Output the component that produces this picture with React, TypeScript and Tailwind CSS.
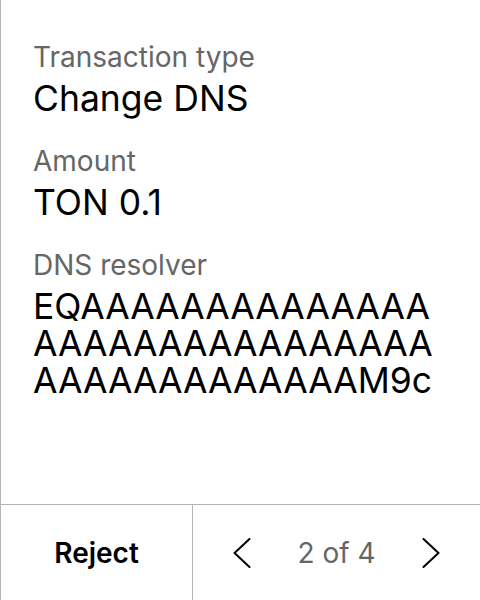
import React from 'react';

const rows = [
  { label: 'Transaction type', value: 'Change DNS' },
  { label: 'Amount', value: 'TON 0.1' },
  { label: 'DNS resolver', value: 'EQAAAAAAAAAAAAAAAAAAAAAAAAAAAAAAAAAAAAAAAAAAAM9c' },
];

function Chevron({ dir }: { dir: 'left' | 'right' }) {
  return (
    <svg width="18" height="30" viewBox="0 0 18 30" fill="none" className="shrink-0">
      <path
        d={dir === 'left' ? 'M16.5 1L1.5 15l15 14' : 'M1.5 1l15 14-15 14'}
        stroke="#000"
        strokeWidth="2"
        strokeLinecap="round"
        strokeLinejoin="round"
      />
    </svg>
  );
}

export default function App() {
  return (
    <div
      className="w-[480px] h-[600px] bg-white border-l border-[#b4b4b4] flex flex-col"
      style={{ fontFamily: 'Inter, "Noto Sans", sans-serif' }}
    >
      <div className="flex-1 pl-[32px] pr-[40px] pt-[40px] flex flex-col gap-[27px]">
        {rows.map((r) => (
          <div key={r.label} className="flex flex-col gap-[6px]">
            <span className="text-[28px] leading-[34px] text-[#666666]">{r.label}</span>
            <span className="text-[35.5px] leading-[37px] text-black break-all">{r.value}</span>
          </div>
        ))}
      </div>
      <div className="h-[96px] border-t border-[#b4b4b4] flex">
        <button className="w-[192px] border-r border-[#b4b4b4] text-[28px] font-semibold text-black">
          Reject
        </button>
        <div className="flex-1 flex items-center justify-center gap-[46px]">
          <Chevron dir="left" />
          <span className="text-[28px] text-[#666666]">2 of 4</span>
          <Chevron dir="right" />
        </div>
      </div>
    </div>
  );
}
